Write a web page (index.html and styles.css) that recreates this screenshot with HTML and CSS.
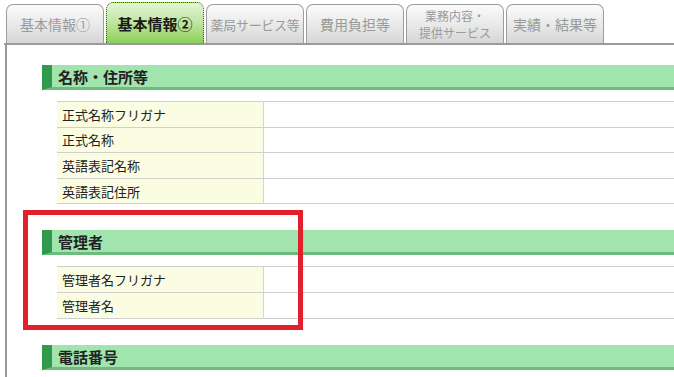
FILE: index.html
```html
<!DOCTYPE html>
<html>
<title>基本情報②</title>

<head>
    <link rel="stylesheet" href="styles.css">
</head>

<body>

    <div class="tabs">
        <div class="tab">基本情報①</div>
        <div class="tab active">基本情報②</div>
        <div class="tab small">薬局サービス等</div>
        <div class="tab">費用負担等</div>
        <div class="tab two"><span>業務内容・</span><span>提供サービス</span></div>
        <div class="tab">実績・結果等</div>
    </div>

    <div class="panel">

        <div class="section">
            <div class="head">名称・住所等</div>
            <table class="info">
                <tr><th>正式名称フリガナ</th><td></td></tr>
                <tr><th>正式名称</th><td></td></tr>
                <tr><th>英語表記名称</th><td></td></tr>
                <tr><th>英語表記住所</th><td></td></tr>
            </table>
        </div>

        <div class="section">
            <div class="head">管理者</div>
            <table class="info">
                <tr><th>管理者名フリガナ</th><td></td></tr>
                <tr><th>管理者名</th><td></td></tr>
            </table>
        </div>

        <div class="section">
            <div class="head">電話番号</div>
        </div>

    </div>

    <!-- annotation box -->
    <div class="mark"></div>

</body>

</html>
```

FILE: styles.css
```css
* {
    box-sizing: border-box;
}

body {
    margin: 0;
    background: #fff;
    font-family: "Noto Sans CJK JP", "Noto Sans", sans-serif;
    color: #222;
    overflow: hidden;
}

/* Tabs */

.tabs {
    display: flex;
    align-items: flex-end;
    gap: 2px;
    height: 45px;
    margin-left: 4px;
    padding-left: 2px;
    border-bottom: 2px solid #9a9a9a;
}

.tab {
    width: 98px;
    height: 39px;
    border: 1px solid #9c9c9c;
    border-bottom: none;
    border-radius: 7px 7px 0 0;
    background: linear-gradient(#fbfbfb, #e6e6e6 60%, #d6d6d6);
    color: #9a9a9a;
    font-size: 14px;
    display: flex;
    flex-direction: column;
    align-items: center;
    justify-content: center;
    text-align: center;
}

.tab.small {
    font-size: 13px;
    letter-spacing: -0.3px;
}

.tab.two {
    font-size: 12px;
    line-height: 17px;
}

.tab.two span {
    display: block;
}

.tab.active {
    height: 41px;
    color: #1b1b1b;
    font-weight: bold;
    font-size: 15px;
    border: 1px dotted #4a4a7a;
    border-bottom: none;
    background: linear-gradient(#e4f5d6, #bfe59f 50%, #8ccf58);
}

/* Panel */

.panel {
    margin-left: 5px;
    border-left: 2px solid #9a9a9a;
    padding: 20px 0 0 35px;
    min-height: 340px;
}

.section {
    margin-bottom: 26px;
}

.head {
    height: 25px;
    background: #a1e4ae;
    border-bottom: 3px solid #6cbc80;
    border-left: 10px solid #2f9a4c;
    padding-left: 6px;
    font-size: 15px;
    font-weight: bold;
    line-height: 23px;
    color: #222;
}

table.info {
    margin: 11px 0 0 15px;
    width: calc(100% - 15px);
    border-collapse: collapse;
}

table.info th,
table.info td {
    height: 25.6px;
    border-top: 1px solid #cfcfcf;
    border-bottom: 1px solid #cfcfcf;
    padding: 0 5px;
    font-size: 13px;
    font-weight: normal;
    text-align: left;
}

table.info th {
    width: 206px;
    background: #fbfde2;
    border-right: 1px solid #d8d8c0;
}

/* Red annotation box */

.mark {
    position: absolute;
    left: 23px;
    top: 210px;
    width: 280px;
    height: 120px;
    border: 5px solid #e2202b;
}
```
